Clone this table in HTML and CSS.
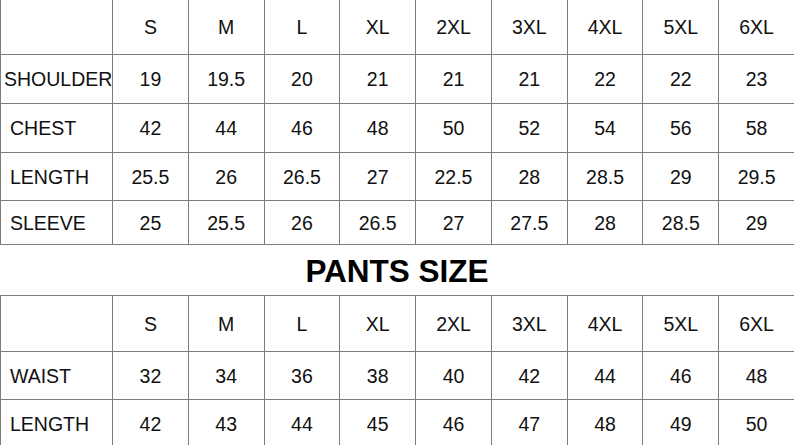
FILE: index.html
```html
<!DOCTYPE html>
<html lang="en">
<head>
<meta charset="utf-8">
<title>Size Chart</title>
<link rel="stylesheet" href="styles.css">
</head>
<body>
<div class="chart">
  <div class="grid shirt">
    <div class="cell label"></div>
    <div class="cell">S</div><div class="cell">M</div><div class="cell">L</div><div class="cell">XL</div><div class="cell">2XL</div><div class="cell">3XL</div><div class="cell">4XL</div><div class="cell">5XL</div><div class="cell">6XL</div>

    <div class="cell label tight">SHOULDER</div>
    <div class="cell">19</div><div class="cell">19.5</div><div class="cell">20</div><div class="cell">21</div><div class="cell">21</div><div class="cell">21</div><div class="cell">22</div><div class="cell">22</div><div class="cell">23</div>

    <div class="cell label">CHEST</div>
    <div class="cell">42</div><div class="cell">44</div><div class="cell">46</div><div class="cell">48</div><div class="cell">50</div><div class="cell">52</div><div class="cell">54</div><div class="cell">56</div><div class="cell">58</div>

    <div class="cell label">LENGTH</div>
    <div class="cell">25.5</div><div class="cell">26</div><div class="cell">26.5</div><div class="cell">27</div><div class="cell">22.5</div><div class="cell">28</div><div class="cell">28.5</div><div class="cell">29</div><div class="cell">29.5</div>

    <div class="cell label">SLEEVE</div>
    <div class="cell">25</div><div class="cell">25.5</div><div class="cell">26</div><div class="cell">26.5</div><div class="cell">27</div><div class="cell">27.5</div><div class="cell">28</div><div class="cell">28.5</div><div class="cell">29</div>
  </div>

  <h2 class="title">PANTS SIZE</h2>

  <div class="grid pants">
    <div class="cell label"></div>
    <div class="cell">S</div><div class="cell">M</div><div class="cell">L</div><div class="cell">XL</div><div class="cell">2XL</div><div class="cell">3XL</div><div class="cell">4XL</div><div class="cell">5XL</div><div class="cell">6XL</div>

    <div class="cell label">WAIST</div>
    <div class="cell">32</div><div class="cell">34</div><div class="cell">36</div><div class="cell">38</div><div class="cell">40</div><div class="cell">42</div><div class="cell">44</div><div class="cell">46</div><div class="cell">48</div>

    <div class="cell label">LENGTH</div>
    <div class="cell">42</div><div class="cell">43</div><div class="cell">44</div><div class="cell">45</div><div class="cell">46</div><div class="cell">47</div><div class="cell">48</div><div class="cell">49</div><div class="cell">50</div>
  </div>
</div>
</body>
</html>
```
FILE: styles.css
```css
html, body {
  margin: 0;
  padding: 0;
  background: #ffffff;
  overflow: hidden;
}

.chart {
  width: 794px;
  height: 445px;
  overflow: hidden;
  font-family: "Liberation Sans", Arial, sans-serif;
  color: #111111;
}

.grid {
  display: grid;
  width: 795px;
  grid-template-columns: 112px repeat(9, 1fr);
  border-left: 1px solid #7c7c7c;
  box-sizing: border-box;
}

.shirt {
  grid-template-rows: 55px 49px 49px 48px 44px;
}

.pants {
  border-top: 1px solid #7c7c7c;
  grid-template-rows: 56px 48px 48px;
}

.cell {
  box-sizing: border-box;
  border-right: 1px solid #7c7c7c;
  border-bottom: 1px solid #7c7c7c;
  display: flex;
  align-items: center;
  justify-content: center;
  font-size: 19.5px;
  white-space: nowrap;
  padding-top: 1px;
}

.label {
  justify-content: flex-start;
  padding-left: 9px;
}

.label.tight {
  padding-left: 3px;
}

.title {
  margin: 0;
  height: 50px;
  line-height: 52px;
  text-align: center;
  font-size: 31.5px;
  font-weight: bold;
  color: #000000;
}
```
